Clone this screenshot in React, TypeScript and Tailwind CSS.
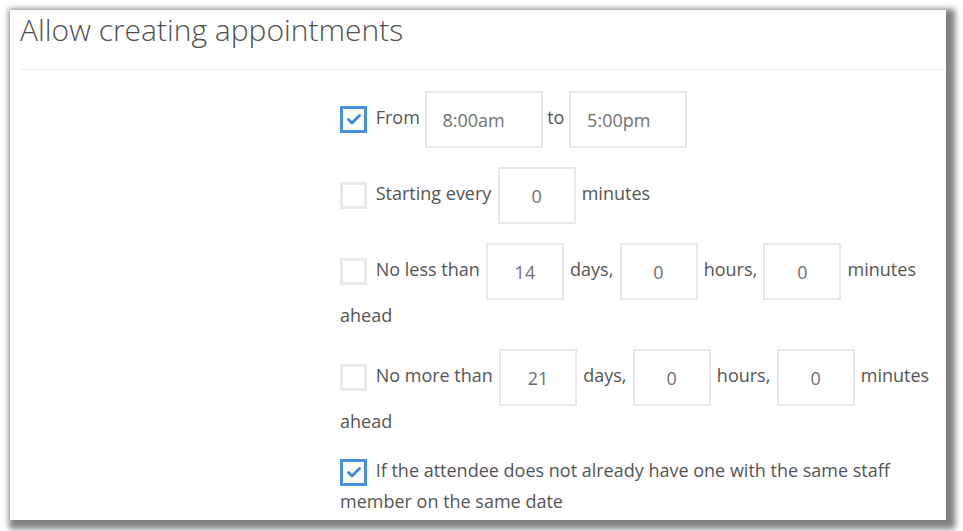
import React from "react";

function Check({ on }: { on?: boolean }) {
  return (
    <span
      className={
        "inline-flex h-[27px] w-[27px] items-center justify-center align-middle mr-[4px] border-[3px] " +
        (on ? "border-[#4a90e2]" : "border-[#e9e9e9]")
      }
    >
      {on && (
        <svg width="14" height="11" viewBox="0 0 14 11" fill="none">
          <path
            d="M1.5 5.5 L5 9 L12.5 1.5"
            stroke="#3b86e0"
            strokeWidth="2.8"
            strokeLinecap="round"
            strokeLinejoin="round"
          />
        </svg>
      )}
    </span>
  );
}

function Field({ value, wide }: { value: string; wide?: boolean }) {
  return (
    <span
      className={
        "inline-flex h-[57px] items-center align-middle border-2 border-[#e8e8e8] text-[18px] text-[#707070] " +
        (wide ? "w-[118px] pl-[16px]" : "mx-[1.5px] w-[78px] justify-center")
      }
    >
      {value}
    </span>
  );
}

export default function App() {
  return (
    <div
      className="h-[531px] w-[963px] bg-white pl-[10px] pt-[10px]"
      style={{ fontFamily: '"Open Sans", "Liberation Sans", sans-serif' }}
    >
      <div className="h-[510px] w-[936px] overflow-hidden bg-white shadow-[4px_4px_6px_5px_rgba(0,0,0,0.5)]">
        <h1 className="pl-[10px] pt-[2px] text-[30px] font-light leading-[1.2] text-[#505050]">
          Allow creating appointments
        </h1>
        <div className="ml-[10px] mt-[21px] h-px bg-[#eeeeee]" />

        <div className="ml-[330px] mt-[21px] w-[598px] text-[18px] leading-[30px] text-[#555555]">
          <div className="mb-[19px]">
            <Check on /> From <Field value="8:00am" wide /> to <Field value="5:00pm" wide />
          </div>
          <div className="mb-[19px]">
            <Check /> Starting every <Field value="0" /> minutes
          </div>
          <div className="mb-[19px]">
            <Check /> No less than <Field value="14" /> days, <Field value="0" /> hours,{" "}
            <Field value="0" /> minutes ahead
          </div>
          <div className="mb-[19px]">
            <Check /> No more than <Field value="21" /> days, <Field value="0" /> hours,{" "}
            <Field value="0" /> minutes ahead
          </div>
          <div>
            <Check on /> If the attendee does not already have one with the same staff member on
            the same date
          </div>
        </div>
      </div>
    </div>
  );
}
